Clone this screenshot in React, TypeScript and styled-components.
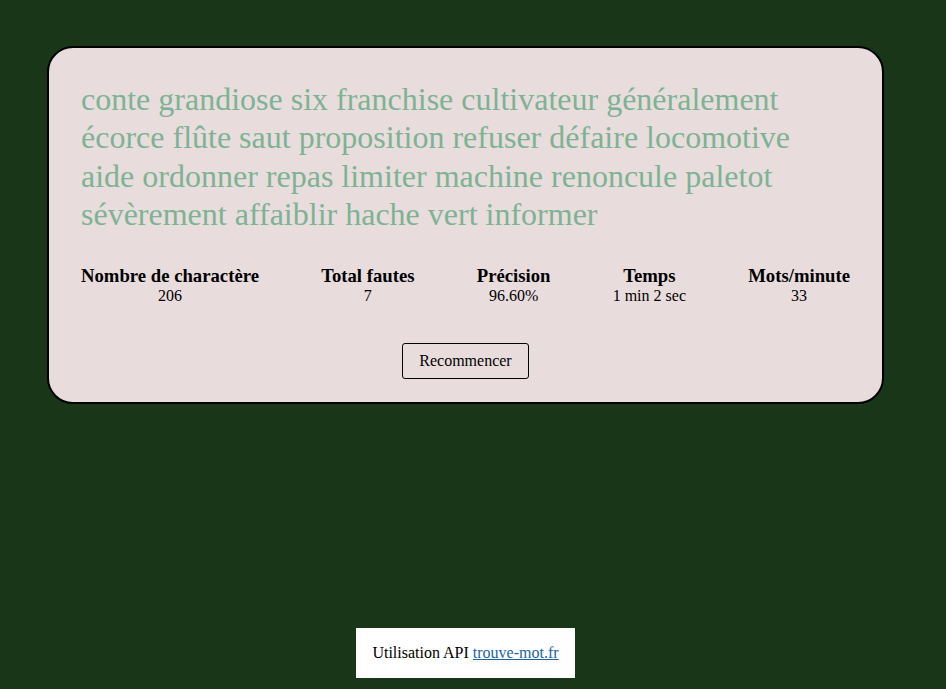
import React from "react";
import styled, { createGlobalStyle } from "styled-components";

const Global = createGlobalStyle`
  html, body { margin: 0; padding: 0; }
  body {
    background: #1a3619;
    font-family: "Liberation Serif", "Times New Roman", serif;
    min-height: 689px;
  }
`;

const Page = styled.div`
  width: 837px;
  margin-left: 47px;
  padding-top: 46px;
  display: flex;
  flex-direction: column;
  align-items: center;
`;

const Card = styled.section`
  box-sizing: border-box;
  width: 100%;
  background: #e9dcdd;
  border: 2px solid #000;
  border-radius: 26px;
  padding: 32px 32px 23px;
  display: flex;
  flex-direction: column;
  align-items: center;
`;

const Words = styled.p`
  margin: 0;
  align-self: stretch;
  font-size: 32px;
  line-height: 38.4px;
  color: #7db394;
`;

const Stats = styled.div`
  align-self: stretch;
  margin-top: 31px;
  display: flex;
  justify-content: space-between;
`;

const Stat = styled.div`
  display: flex;
  flex-direction: column;
  align-items: center;
  color: #000;
`;

const Label = styled.h3`
  margin: 0;
  font-size: 18.72px;
  font-weight: bold;
  line-height: 21.5px;
`;

const Value = styled.span`
  margin-top: 1px;
  font-size: 16px;
  line-height: 18.4px;
`;

const Button = styled.button`
  margin-top: 37px;
  font-family: inherit;
  font-size: 16px;
  line-height: 18.4px;
  color: #000;
  background: transparent;
  border: 1px solid #000;
  border-radius: 3px;
  padding: 8px 16px;
  cursor: pointer;
`;

const Footer = styled.footer`
  margin-top: 224px;
  background: #fff;
  padding: 16px 16px;
  font-size: 16px;
  line-height: 18.4px;
  color: #000;
`;

const Link = styled.a`
  color: #1d63a3;
  text-decoration: underline;
`;

const stats = [
  { label: "Nombre de charactère", value: "206" },
  { label: "Total fautes", value: "7" },
  { label: "Précision", value: "96.60%" },
  { label: "Temps", value: "1 min 2 sec" },
  { label: "Mots/minute", value: "33" },
];

export default function App() {
  return (
    <>
      <Global />
      <Page>
        <Card>
          <Words>
            conte grandiose six franchise cultivateur généralement écorce flûte saut proposition refuser défaire locomotive aide ordonner repas limiter machine renoncule paletot sévèrement affaiblir hache vert informer
          </Words>
          <Stats>
            {stats.map((s) => (
              <Stat key={s.label}>
                <Label>{s.label}</Label>
                <Value>{s.value}</Value>
              </Stat>
            ))}
          </Stats>
          <Button>Recommencer</Button>
        </Card>
        <Footer>
          Utilisation API <Link href="#">trouve-mot.fr</Link>
        </Footer>
      </Page>
    </>
  );
}
